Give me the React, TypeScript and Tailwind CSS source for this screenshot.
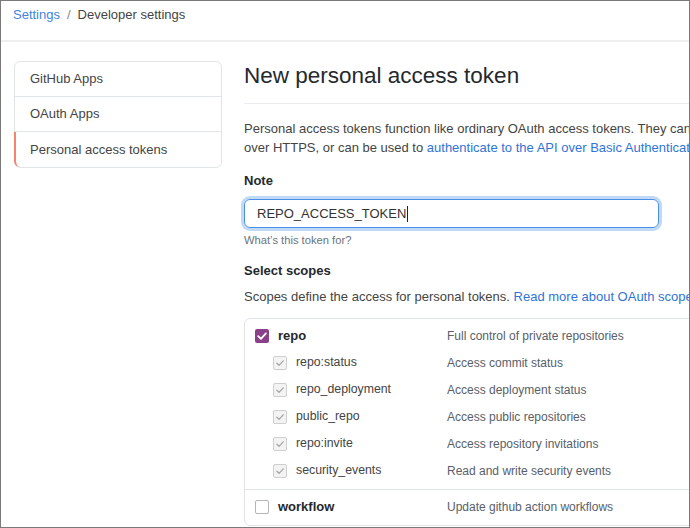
import React from 'react';

type Scope = { name: string; desc: string };

const repoChildren: Scope[] = [
  { name: 'repo:status', desc: 'Access commit status' },
  { name: 'repo_deployment', desc: 'Access deployment status' },
  { name: 'public_repo', desc: 'Access public repositories' },
  { name: 'repo:invite', desc: 'Access repository invitations' },
  { name: 'security_events', desc: 'Read and write security events' },
];

function Check({ kind }: { kind: 'on' | 'sub' | 'off' }) {
  if (kind === 'on') {
    return (
      <span className="w-[14px] h-[14px] rounded-[2px] bg-[#8a418a] flex items-center justify-center shrink-0">
        <svg width="12" height="12" viewBox="0 0 12 12">
          <path d="M2.2 6.2 L4.9 8.8 L9.9 3.4" fill="none" stroke="#fff" strokeWidth="1.8" strokeLinecap="round" strokeLinejoin="round" />
        </svg>
      </span>
    );
  }
  if (kind === 'sub') {
    return (
      <span className="w-[14px] h-[14px] rounded-[2px] bg-[#f3f3f3] border border-[#cfcfcf] flex items-center justify-center shrink-0">
        <svg width="10" height="10" viewBox="0 0 12 12">
          <path d="M2.2 6.2 L4.9 8.8 L9.9 3.4" fill="none" stroke="#a8a8a8" strokeWidth="1.6" strokeLinecap="round" strokeLinejoin="round" />
        </svg>
      </span>
    );
  }
  return <span className="w-[14px] h-[14px] rounded-[2px] bg-white border border-[#b5b5b5] shrink-0" />;
}

export default function App() {
  return (
    <div className="w-[690px] h-[528px] border border-[#7a7a7a] overflow-hidden bg-white text-[13px] text-[#24292e] font-['Liberation_Sans',Arial,sans-serif]">
      {/* Breadcrumb */}
      <div className="h-[41px] border-b-2 border-[#efefef] pl-[12px] pt-[4px] leading-[20px]">
        <a href="#" className="text-[#3f84e0]">Settings</a>
        <span className="text-[#888] mx-[7px]">/</span>
        <span className="text-[#444]">Developer settings</span>
      </div>

      <div className="flex pt-[19px] pl-[13px]">
        {/* Sidebar */}
        <nav className="w-[208px] shrink-0 border border-[#e1e4e8] rounded-[6px] self-start text-[#444] leading-[20px]">
          <div className="h-[35px] flex items-center px-[15px] border-b border-[#e1e4e8]">GitHub Apps</div>
          <div className="h-[35px] flex items-center px-[15px] border-b border-[#e1e4e8]">OAuth Apps</div>
          <div className="h-[35px] flex items-center pl-[14px] border-l-2 border-[#f9826c] -ml-px rounded-bl-[6px]">Personal access tokens</div>
        </nav>

        {/* Main */}
        <main className="ml-[22px] w-[620px] shrink-0">
          <h1 className="text-[22.5px] leading-[30px] font-normal text-[#24292e] pb-[12px] border-b border-[#eaecef]">
            New personal access token
          </h1>

          <p className="mt-[15px] leading-[19px] text-[#444] whitespace-nowrap">
            <span className="block">Personal access tokens function like ordinary OAuth access tokens. They can be used instead of a password for Git</span>
            <span className="block">
              over HTTPS, or can be used to <a href="#" className="text-[#2f74d6]">authenticate to the API over Basic Authentication</a>.
            </span>
          </p>

          <div className="mt-[14px] font-bold leading-[20px]">Note</div>
          <div className="mt-[8px] w-[415px] h-[29px] rounded-[6px] border border-[#4a90e8] shadow-[0_0_0_3px_rgba(3,102,214,0.25)] flex items-center pl-[12px] text-[#333]">
            <span>REPO_ACCESS_TOKEN</span>
            <span className="w-px h-[16px] bg-[#222] ml-px" />
          </div>
          <div className="mt-[4px] text-[11.2px] leading-[16px] text-[#6a737d]">What’s this token for?</div>

          <div className="mt-[13px] font-bold leading-[20px]">Select scopes</div>
          <div className="mt-[6px] leading-[20px] text-[#444] whitespace-nowrap">
            Scopes define the access for personal tokens. <a href="#" className="text-[#2f74d6]">Read more about OAuth scopes.</a>
          </div>

          {/* Scopes */}
          <div className="mt-[11px] w-[600px] border border-[#e1e4e8] rounded-[6px]">
            <div className="pt-[3px] pb-[5px] border-b border-[#e1e4e8]">
              <div className="h-[27px] flex items-center pl-[10px]">
                <div className="w-[192px] flex items-center gap-[9px]">
                  <Check kind="on" />
                  <span className="font-bold">repo</span>
                </div>
                <span className="text-[12px] text-[#586069]">Full control of private repositories</span>
              </div>
              {repoChildren.map((s) => (
                <div key={s.name} className="h-[27px] flex items-center pl-[28px]">
                  <div className="w-[174px] flex items-center gap-[9px]">
                    <Check kind="sub" />
                    <span className="text-[12.3px] text-[#444]">{s.name}</span>
                  </div>
                  <span className="text-[12px] text-[#586069]">{s.desc}</span>
                </div>
              ))}
            </div>
            <div className="pt-[3px] pb-[5px]">
              <div className="h-[27px] flex items-center pl-[10px]">
                <div className="w-[192px] flex items-center gap-[9px]">
                  <Check kind="off" />
                  <span className="font-bold">workflow</span>
                </div>
                <span className="text-[12px] text-[#586069]">Update github action workflows</span>
              </div>
            </div>
          </div>
        </main>
      </div>
    </div>
  );
}
